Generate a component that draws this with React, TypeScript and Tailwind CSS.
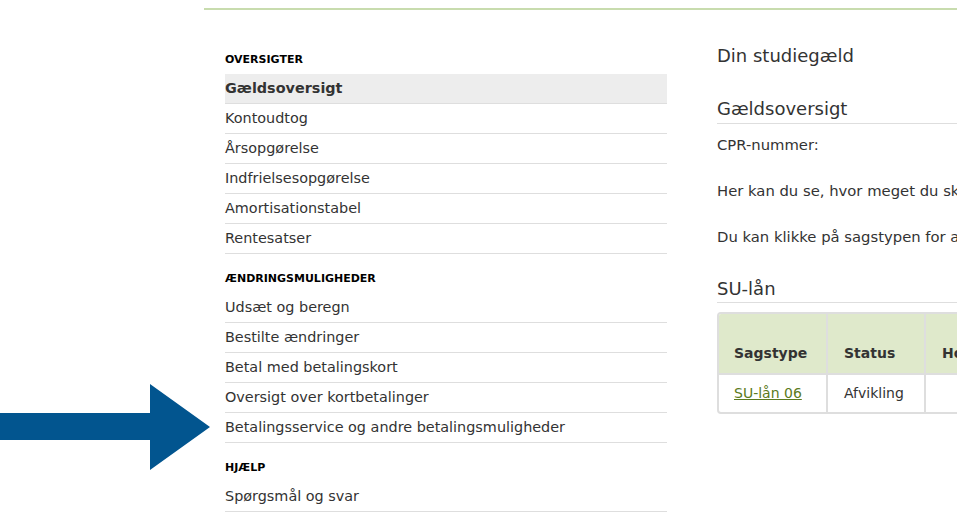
const font = "font-['Verdana','DejaVu_Sans',sans-serif]";

type Item = { label: string; active?: boolean };
type Section = { title: string; items: Item[] };

const sections: Section[] = [
  {
    title: "OVERSIGTER",
    items: [
      { label: "Gældsoversigt", active: true },
      { label: "Kontoudtog" },
      { label: "Årsopgørelse" },
      { label: "Indfrielsesopgørelse" },
      { label: "Amortisationstabel" },
      { label: "Rentesatser" },
    ],
  },
  {
    title: "ÆNDRINGSMULIGHEDER",
    items: [
      { label: "Udsæt og beregn" },
      { label: "Bestilte ændringer" },
      { label: "Betal med betalingskort" },
      { label: "Oversigt over kortbetalinger" },
      { label: "Betalingsservice og andre betalingsmuligheder" },
    ],
  },
  {
    title: "HJÆLP",
    items: [{ label: "Spørgsmål og svar" }],
  },
];

function Arrow() {
  return (
    <svg className="absolute left-0 top-[380px]" width="215" height="95" viewBox="0 380 215 95">
      <polygon
        points="0,413 150,413 150,384 210,427 150,470 150,440 0,440"
        fill="#02558f"
      />
    </svg>
  );
}

function Sidebar() {
  return (
    <nav className="mt-[24px] w-[442px] shrink-0">
      {sections.map((s) => (
        <div key={s.title}>
          <div className="flex h-[39px] items-end pb-[7px] text-[11px] font-bold leading-[14px] text-black">
            {s.title}
          </div>
          <ul>
            {s.items.map((it) => (
              <li
                key={it.label}
                className={
                  "flex h-[30px] items-center border-b border-[#dedede] text-[14.4px] text-[#333] " +
                  (it.active ? "bg-[#ededed] font-bold" : "")
                }
              >
                {it.label}
              </li>
            ))}
          </ul>
        </div>
      ))}
    </nav>
  );
}

function Content() {
  return (
    <div className="min-w-0 flex-1 text-[#333]">
      <h1 className="mt-[33px] text-[18px] leading-[24px]">Din studiegæld</h1>
      <h2 className="mt-[29px] border-b border-[#dedede] pb-[2px] text-[18px] leading-[24px]">
        Gældsoversigt
      </h2>
      <p className="mt-[11px] whitespace-nowrap text-[14.8px] leading-[20px]">CPR-nummer:</p>
      <p className="mt-[26px] whitespace-nowrap text-[14.8px] leading-[20px]">
        Her kan du se, hvor meget du skylder, og hvordan din gæld udvikler sig.
      </p>
      <p className="mt-[26px] whitespace-nowrap text-[14.8px] leading-[20px]">
        Du kan klikke på sagstypen for at se flere detaljer om dit lån.
      </p>
      <h2 className="mt-[30px] border-b border-[#dedede] pb-[1px] text-[18px] leading-[24px]">
        SU-lån
      </h2>
      <div className="mt-[9px] w-[500px] overflow-hidden rounded-[4px] border-2 border-[#dedede]">
        <table className="w-full border-collapse text-[14px]">
          <thead>
            <tr className="h-[60px] bg-[#dfe9cb]">
              <th className="w-[108px] border-r-2 border-[#dedede] pb-[9px] pl-[15px] text-left align-bottom font-bold">
                Sagstype
              </th>
              <th className="w-[98px] border-r-2 border-[#dedede] pb-[9px] pl-[16px] text-left align-bottom font-bold">
                Status
              </th>
              <th className="pb-[9px] pl-[16px] text-left align-bottom font-bold">Hovedstol</th>
            </tr>
          </thead>
          <tbody>
            <tr className="h-[38px] border-t-2 border-[#dedede]">
              <td className="border-r-2 border-[#dedede] pl-[15px]">
                <a href="#" className="text-[#5b7a20] underline">
                  SU-lån 06
                </a>
              </td>
              <td className="border-r-2 border-[#dedede] pl-[16px]">Afvikling</td>
              <td className="pl-[16px]"></td>
            </tr>
          </tbody>
        </table>
      </div>
    </div>
  );
}

export default function App() {
  return (
    <div className={"relative h-[531px] w-[957px] overflow-hidden bg-white " + font}>
      <div className="ml-[204px] mt-[8px] h-[2px] bg-[#c8dcae]" />
      <div className="ml-[225px] mt-[1px] flex gap-[50px]">
        <Sidebar />
        <Content />
      </div>
      <Arrow />
    </div>
  );
}
